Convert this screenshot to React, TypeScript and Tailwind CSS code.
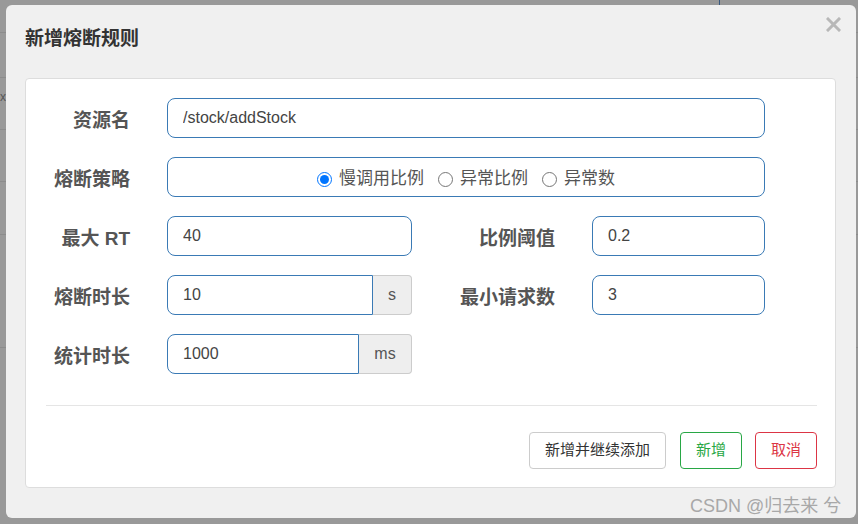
import React from 'react';

const font = { fontFamily: '"Liberation Sans", "Noto Sans CJK SC", sans-serif' };

function Label({ text, className = '' }: { text: string; className?: string }) {
  return (
    <div className={`h-[40px] text-right text-[19px] font-bold leading-[46px] text-[#555] ${className}`}>{text}</div>
  );
}

function TextInput({ value, className = '' }: { value: string; className?: string }) {
  return (
    <input
      readOnly
      value={value}
      className={`h-[40px] rounded-[8px] border border-[#3a7ab5] bg-white px-[15px] text-[16px] text-[#444] outline-none ${className}`}
      style={font}
    />
  );
}

function AddonInput({ value, unit, inputW, addonW }: { value: string; unit: string; inputW: string; addonW: string }) {
  return (
    <div className="flex h-[40px]">
      <input
        readOnly
        value={value}
        className={`h-[40px] rounded-l-[8px] border border-[#3a7ab5] bg-white px-[15px] text-[16px] text-[#444] outline-none ${inputW}`}
        style={font}
      />
      <div className={`flex h-[40px] items-center justify-center rounded-r-[4px] border border-l-0 border-[#ccc] bg-[#eee] text-[16px] text-[#555] ${addonW}`}>
        {unit}
      </div>
    </div>
  );
}

function Radio({ label, checked }: { label: string; checked?: boolean }) {
  return (
    <label className="flex items-center gap-[7px] pt-[4px] text-[17px] text-[#555]">
      <input type="radio" name="strategy" defaultChecked={checked} className="m-0 h-[15px] w-[15px]" />
      <span>{label}</span>
    </label>
  );
}

export default function App() {
  const bgRows = [33, 45, 52, 52, 53, 113];

  return (
    <div className="relative h-[524px] w-[858px] overflow-hidden bg-[#999]" style={font}>
      {/* page behind the overlay */}
      <div className="flex flex-col">
        {bgRows.map((h, i) => (
          <div key={i} className="border-b border-[#8c8c8c]" style={{ height: h }}>
            {i === 2 && <span className="block pt-[12px] text-[12px] leading-[14px] text-[#555]">x</span>}
          </div>
        ))}
      </div>
      <div className="absolute left-[719px] top-0 h-[6px] w-px bg-[#3a5a80]" />

      {/* modal */}
      <div className="absolute left-[6px] top-[5px] flex h-[513px] w-[850px] flex-col rounded-[6px] bg-[#f0f0f0]">
        <div className="flex h-[73px] items-start justify-between pl-[19px] pr-[15px] pt-[22px]">
          <h1 className="text-[19px] font-bold leading-[24px] text-[#333]">新增熔断规则</h1>
          <svg width="15" height="15" viewBox="0 0 15 15" className="mt-[-10px]">
            <path d="M2 2 L13 13 M13 2 L2 13" stroke="#b8b8b8" strokeWidth="3" strokeLinecap="square" />
          </svg>
        </div>

        <div className="ml-[19px] mr-[20px] flex h-[410px] flex-col rounded-[4px] border border-[#ddd] bg-white pl-[20px] pr-[18px] pt-[19px]">
          <div className="flex flex-col gap-[19px]">
            <div className="flex">
              <Label text="资源名" className="w-[84px]" />
              <TextInput value="/stock/addStock" className="ml-[37px] w-[598px]" />
            </div>

            <div className="flex">
              <Label text="熔断策略" className="w-[84px]" />
              <div className="ml-[37px] flex h-[40px] w-[598px] items-center justify-center gap-[14px] rounded-[8px] border border-[#3a7ab5]">
                <Radio label="慢调用比例" checked />
                <Radio label="异常比例" />
                <Radio label="异常数" />
              </div>
            </div>

            <div className="flex">
              <Label text="最大 RT" className="w-[84px]" />
              <TextInput value="40" className="ml-[37px] w-[245px]" />
              <Label text="比例阈值" className="w-[143px]" />
              <TextInput value="0.2" className="ml-[37px] w-[173px]" />
            </div>

            <div className="flex">
              <Label text="熔断时长" className="w-[84px]" />
              <div className="ml-[37px]">
                <AddonInput value="10" unit="s" inputW="w-[206px]" addonW="w-[39px]" />
              </div>
              <Label text="最小请求数" className="w-[143px]" />
              <TextInput value="3" className="ml-[37px] w-[173px]" />
            </div>

            <div className="flex">
              <Label text="统计时长" className="w-[84px]" />
              <div className="ml-[37px]">
                <AddonInput value="1000" unit="ms" inputW="w-[192px]" addonW="w-[53px]" />
              </div>
            </div>
          </div>

          <div className="mt-[31px] border-t border-[#e5e5e5]" />

          <div className="mt-[26px] flex justify-end gap-[13px]">
            <button className="mr-[1px] h-[37px] w-[137px] rounded-[4px] border border-[#ccc] bg-white text-[15px] text-[#333]">
              新增并继续添加
            </button>
            <button className="h-[37px] w-[62px] rounded-[4px] border border-[#28a745] bg-white text-[15px] text-[#28a745]">
              新增
            </button>
            <button className="h-[37px] w-[62px] rounded-[4px] border border-[#dc3545] bg-white text-[15px] text-[#dc3545]">
              取消
            </button>
          </div>
        </div>
      </div>

      <div className="absolute left-[690px] top-[495px] text-[18px] leading-[22px] text-[#a8a8a8]">CSDN @归去来 兮</div>
    </div>
  );
}
